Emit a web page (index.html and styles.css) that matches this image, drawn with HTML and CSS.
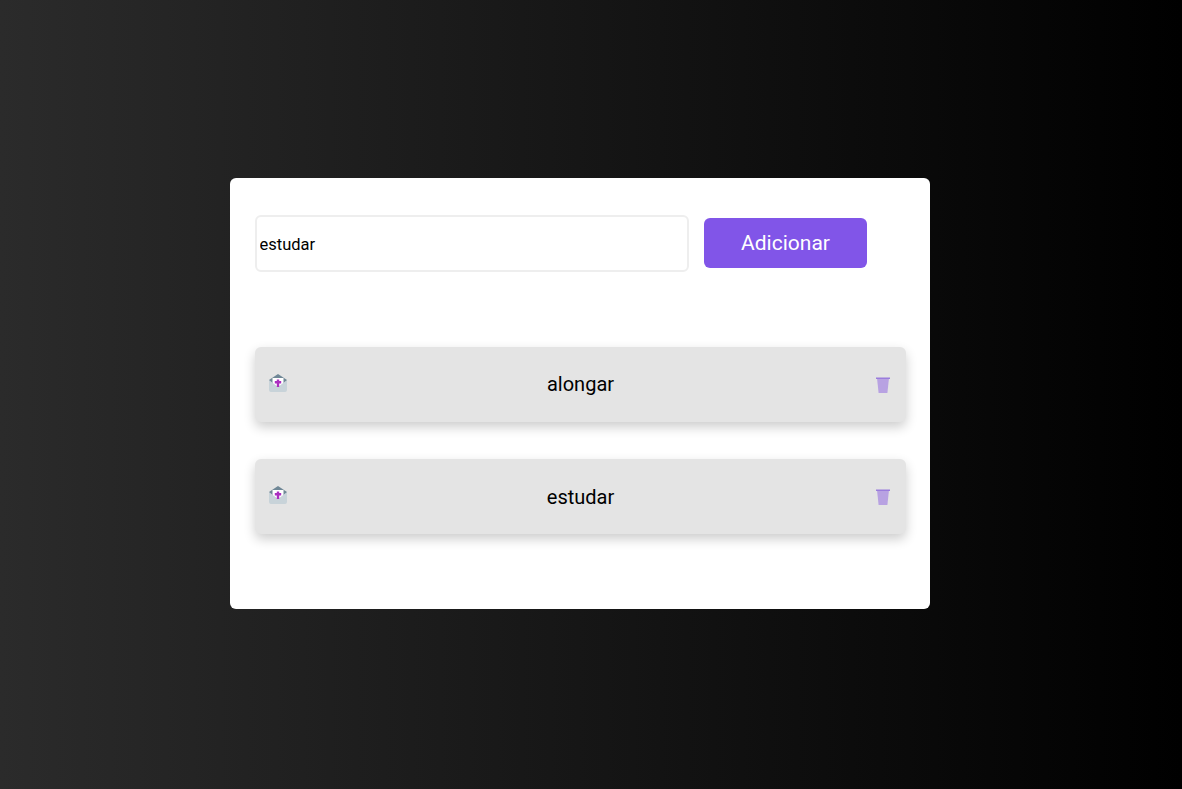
FILE: index.html
```html
<!DOCTYPE html>
<html lang="pt-BR">
<head>
  <meta charset="UTF-8" />
  <meta name="viewport" content="width=device-width, initial-scale=1.0"/>
  <title>Lista de tarefas</title>
  <link rel="stylesheet" href="styles.css">
</head>
<body>
  <main class="todo-card">

    <form class="todo-form">
      <input type="text" class="todo-input" value="estudar" />
      <button type="button" class="todo-add">Adicionar</button>
    </form>

    <ul class="todo-list">
      <li class="todo-item">
        <svg class="icon-mail" viewBox="0 0 18 21">
          <path d="M0 6 9 0l9 6v5H0z" fill="#6f8796"/>
          <path d="M3.500 4h11v10h-11z" fill="#fff"/>
          <path d="M0 6l9 7 9-7v10a2 2 0 0 1-2 2H2a2 2 0 0 1-2-2z" fill="#c8d3d9"/>
          <path d="M7.800 5.500h2.400v1.500h2v2.500h-2v3.500H7.800V9.500h-2V7h2z" fill="#ab2fc0"/>
        </svg>
        <span class="todo-text">alongar</span>
        <svg class="icon-trash" viewBox="0 -2 14 19">
          <path d="M1 1h12l-1.600 15H2.600z" fill="#b8a2e2"/>
          <path d="M0 .5h14v1.500H0z" fill="#9a7cdc"/>
        </svg>
      </li>
      <li class="todo-item">
        <svg class="icon-mail" viewBox="0 0 18 21">
          <path d="M0 6 9 0l9 6v5H0z" fill="#6f8796"/>
          <path d="M3.500 4h11v10h-11z" fill="#fff"/>
          <path d="M0 6l9 7 9-7v10a2 2 0 0 1-2 2H2a2 2 0 0 1-2-2z" fill="#c8d3d9"/>
          <path d="M7.800 5.500h2.400v1.500h2v2.500h-2v3.500H7.800V9.500h-2V7h2z" fill="#ab2fc0"/>
        </svg>
        <span class="todo-text">estudar</span>
        <svg class="icon-trash" viewBox="0 -2 14 19">
          <path d="M1 1h12l-1.600 15H2.600z" fill="#b8a2e2"/>
          <path d="M0 .5h14v1.500H0z" fill="#9a7cdc"/>
        </svg>
      </li>
    </ul>

  </main>
</body>
</html>
```

FILE: styles.css
```css
* {
  box-sizing: border-box;
}
body {
  margin: 0;
  height: 100vh;
  display: flex;
  align-items: center;
  justify-content: center;
  background: linear-gradient(to right, #2b2b2b, #000);
  font-family: Roboto, sans-serif;
}

.todo-card {
  width: 700px;
  height: 431px;
  margin: 0 22px 2px 0;
  padding: 37px 24px 0 25px;
  background: #fff;
  border-radius: 6px;
}

.todo-form {
  display: flex;
  align-items: center;
  gap: 15px;
}
.todo-input {
  width: 434px;
  height: 57px;
  padding: 2px 2px 0 2.5px;
  border: 2px solid #eee;
  border-radius: 6px;
  background: #fff;
  color: #000;
  font-family: Roboto, sans-serif;
  font-size: 16.5px;
}
.todo-add {
  width: 163px;
  height: 50px;
  margin-bottom: 2px;
  border: none;
  border-radius: 6px;
  background: #8155e8;
  color: #fff;
  font-family: Roboto, sans-serif;
  font-size: 21px;
}

.todo-list {
  list-style: none;
  margin: 74.6px 0 0;
  padding: 0;
}
.todo-item {
  display: flex;
  align-items: center;
  justify-content: space-between;
  height: 75px;
  padding: 0 16px 0 14px;
  border-radius: 6px;
  background: #e4e4e4;
  box-shadow: 0 5px 12px rgba(0,0,0,0.2);
}
.todo-item + .todo-item {
  margin-top: 37.5px;
}
.todo-text {
  margin-right: 2px;
  font-size: 20px;
  color: #000;
}

.icon-mail {
  width: 18px;
  height: 21px;
}
.icon-trash {
  width: 14px;
  height: 19px;
}
```
